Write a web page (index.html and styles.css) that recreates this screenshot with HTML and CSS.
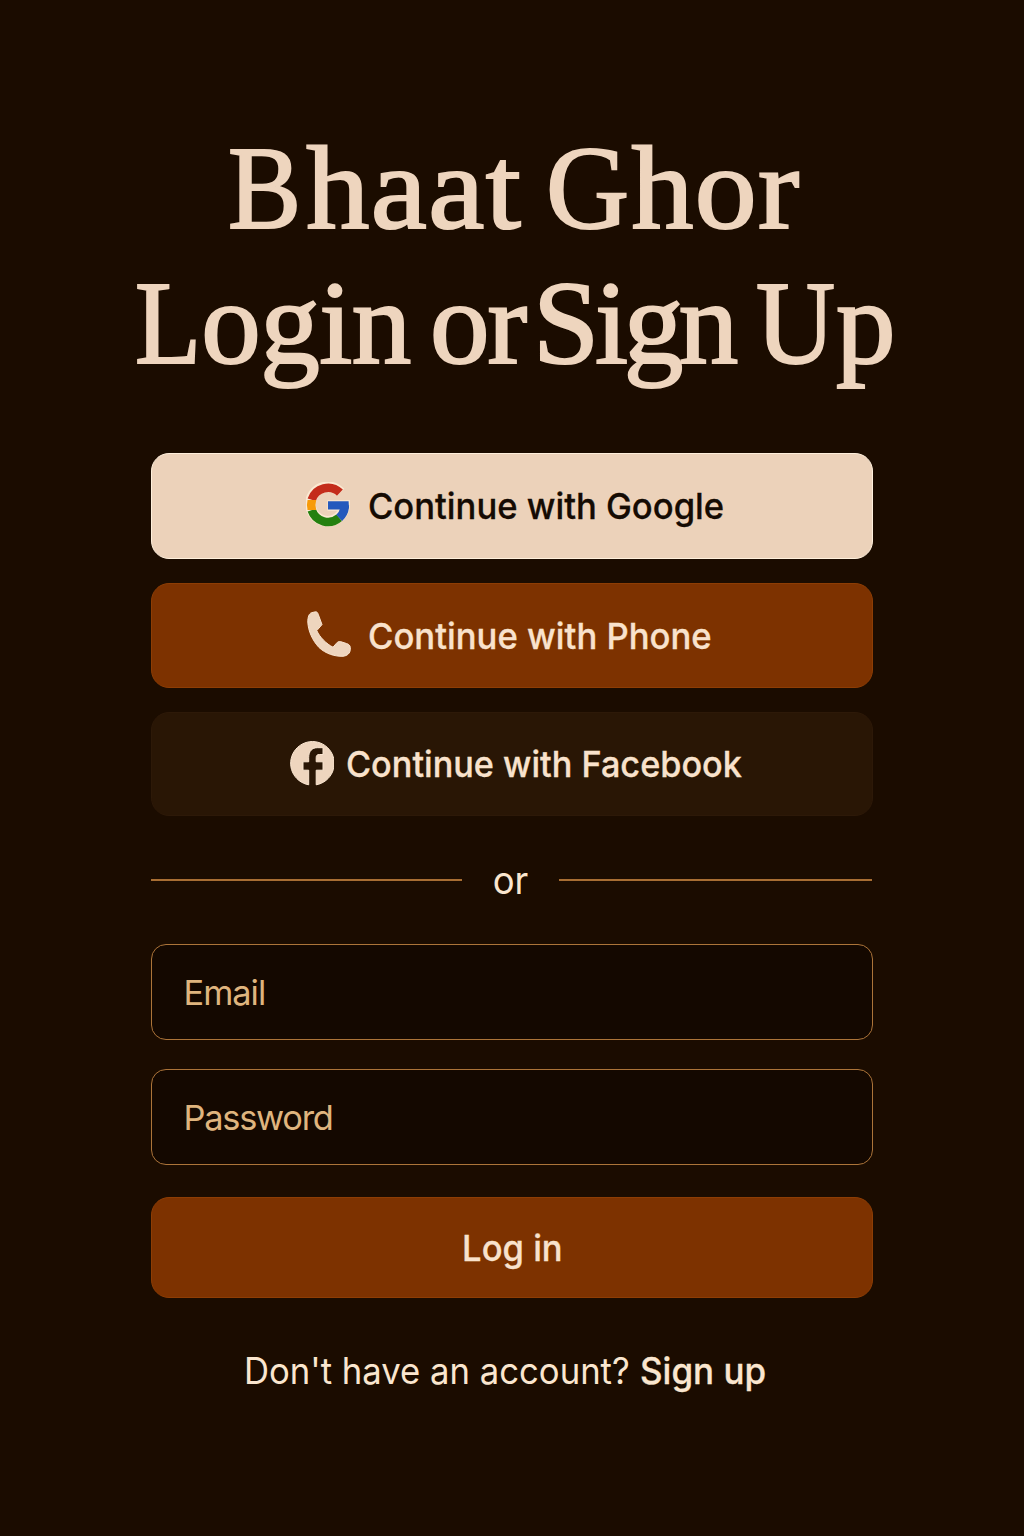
FILE: index.html
```html
<!DOCTYPE html>
<html lang="en">
<head>
<meta charset="utf-8">
<title>Bhaat Ghor</title>
<link rel="stylesheet" href="styles.css">
</head>
<body>
<main class="login">
  <h1 class="title">
    <span class="title-line title-brand"><span class="w w-bhaat"><span class="cap cap-b">B</span>haat</span> <span class="w w-ghor"><span class="cap cap-g">G</span>hor</span></span>
    <span class="title-line title-action"><span class="w w-login"><span class="cap cap-l">L</span>ogin</span> <span class="w w-or">or</span> <span class="w w-sign">Sign</span> <span class="w w-up"><span class="cap cap-u">U</span>p</span></span>
  </h1>

  <div class="providers">
    <button class="btn btn-google" type="button">
      <svg class="icon" viewBox="0 0 44 46" aria-hidden="true">
        <path fill="none" stroke="#fbe9d2" stroke-width="10.500" d="M34.400 10.400A17.200 17.200 0 1 0 38.800 23.500H21.500"/>
        <g fill="none" stroke-width="8.600">
          <path stroke="#c42c1b" d="M33.900 10.600A17.200 17.200 0 0 0 5.700 17.800"/>
          <path stroke="#24800f" d="M5.700 28.200A17.200 17.200 0 0 0 33.200 35.800"/>
          <path stroke="#2459bd" d="M33.200 35.800A17.200 17.200 0 0 0 38.800 23.200"/>
        </g>
        <path fill="#f79a08" d="M1.600 18H10.200Q8.700 23 10.200 28H1.600Q.2 23 1.600 18z"/>
        <path fill="#2459bd" d="M22 19.300H42.600Q43 22.500 42.500 26L37 27.500H22z"/>
      </svg>
      <span class="label l-google">Continue with Google</span>
    </button>
    <button class="btn btn-brown btn-phone" type="button">
      <svg class="icon" viewBox="0 0 44 46" aria-hidden="true">
        <path fill="#eed5be" stroke="#f9e4cf" stroke-linejoin="round" d="M8.500.8L4.500 1.700C2 2.600.8 6 .8 11C1.200 20 5.500 29.500 12 36.500C19 43 28 45.500 36 45.300C40.500 44.800 43.300 42 43.300 38.200V36.600C43.200 34.500 42 33.300 39.500 32.500L33.500 30.600C32 30.200 30.600 30.800 29.500 32.200L26 36.200C19.500 33 12.500 26 9.800 19.600L15 13.600L11.200 3.200C10.700 1.600 9.900.7 8.500.8z"/>
      </svg>
      <span class="label l-phone">Continue with Phone</span>
    </button>
    <button class="btn btn-dark" type="button">
      <svg class="icon" viewBox="0 0 44 46" aria-hidden="true">
        <path fill="#eed5be" stroke="#fae6d1" d="M18.700 44.800V30.200H13V21.800H18.700V17.500C18.700 11 22.300 7.700 27.300 7.700H33V14.500H29.200C27.200 14.500 26.200 15.500 26.200 17.500V21.800H33V30.200H26.200V44.800A21.800 21.800 0 1 0 18.700 44.800z"/>
      </svg>
      <span class="label l-facebook">Continue with Facebook</span>
    </button>
  </div>

  <div class="divider"><span class="rule"></span><span class="or">or</span><span class="rule"></span></div>

  <form class="form">
    <input class="field field-email" type="email" placeholder="Email" aria-label="Email">
    <input class="field" type="password" placeholder="Password" aria-label="Password">
    <button class="btn btn-brown btn-submit" type="button"><span class="label l-submit">Log in</span></button>
  </form>

  <p class="signup"><span class="ask">Don't have an account?</span> <a class="link" href="#">Sign up</a></p>
</main>
</body>
</html>
```
FILE: styles.css
```css
* { box-sizing: border-box; }

body {
  margin: 0;
  min-height: 1536px;
  background: #1b0c00;
  color: #fae6cf;
  font-family: Inter, "Liberation Sans", sans-serif;
}

.login {
  width: 722px;
  margin: 0 auto;
  padding-top: 121px;
}

.title {
  margin: 0 -20px;
  color: #eed5be;
  font: 400 119px/135px "Liberation Serif", serif;
  -webkit-text-stroke: 2.2px #eed5be;
}

.title-line { display: flex; white-space: nowrap; }
.title-brand { padding-left: 97px; }
.title-action { padding-left: 4px; }
.w { flex: none; transform-origin: 0 50%; }
.w-bhaat { width: 318px; letter-spacing: 1.4px; transform: scaleX(1.06); }
.w-ghor { letter-spacing: 1.3px; transform: scaleX(1.04); }
.w-login { width: 295px; letter-spacing: -.5px; }
.w-or { width: 103px; letter-spacing: -2px; }
.w-sign { width: 223px; letter-spacing: -4.3px; }
.w-up { letter-spacing: -1px; }

/* Capitals are set slightly narrower than the lowercase. */
.cap { display: inline-block; transform-origin: 0 50%; }
.cap-b { margin-right: -7px; transform: scaleX(.87); }
.cap-g { margin-right: -5px; transform: scaleX(.93); }
.cap-l { margin-right: -6px; transform: scaleX(.91); }
.cap-u { margin-right: -5px; transform: scaleX(.92); }

.providers {
  display: flex;
  flex-direction: column;
  gap: 24px;
  margin-top: 62px;
}

.btn {
  display: flex;
  align-items: center;
  width: 100%;
  height: 105px;
  padding: 0 0 0 155px;
  border: 1px solid;
  border-radius: 18px;
  font: 500 36px/44px Inter, "Liberation Sans", sans-serif;
}

.btn-google { height: 106px; padding-left: 154px; background: #ecd2ba; border-color: #fff0dc; color: #150b03; }
.btn-brown { background: #7d3200; border-color: #8d3d04; color: #f9e2cc; }
.btn-dark { height: 104px; padding-left: 138px; background: #291605; border-color: #2d1908; color: #f9e2cc; }

.icon { flex: none; width: 44px; height: 46px; margin: 0 17px 2px 0; }
.btn-google .icon { margin: 0 18px 2px 0; }
.btn-phone .icon { margin-bottom: 4px; }
.btn-dark .icon { margin-right: 12px; }
.label { white-space: nowrap; transform-origin: 0 50%; -webkit-text-stroke: .3px currentColor; }
.l-google { transform: scaleX(.961); }
.l-phone { transform: scaleX(.963); }
.l-facebook { transform: scaleX(.951); }

.divider { display: grid; grid-template-columns: 311px 97px 313px; align-items: center; height: 44px; margin-top: 42px; }
.rule { height: 2px; background: #a86e33; }
.or { font-size: 38px; line-height: 44px; text-align: center; transform: scaleX(.96); }

.form { display: flex; flex-direction: column; margin-top: 42px; }

.field {
  width: 100%;
  height: 96px;
  margin-bottom: 29px;
  padding: 1px 31.500px 0;
  border: 1px solid #ac7439;
  border-radius: 15px;
  outline: 0;
  background: #140800;
  font: 400 34.4px/44px Inter, "Liberation Sans", sans-serif;
  letter-spacing: -1.25px;
}
.field-email { letter-spacing: -1px; }
.field::placeholder { color: #dfb47e; opacity: 1; }

.btn-submit { justify-content: center; height: 101px; margin-top: 3px; padding: 0; }
.l-submit { transform: scaleX(.96); transform-origin: 50% 50%; }

.signup {
  display: flex;
  margin: 50px 0 0;
  padding-left: 93px;
  font-size: 36.5px;
  line-height: 46px;
  white-space: nowrap;
}
.ask { width: 396px; transform: scaleX(.950); transform-origin: 0 50%; }
.link { color: inherit; font-weight: 500; text-decoration: none; transform: scaleX(.958); transform-origin: 0 50%; -webkit-text-stroke: .3px currentColor; }
```
